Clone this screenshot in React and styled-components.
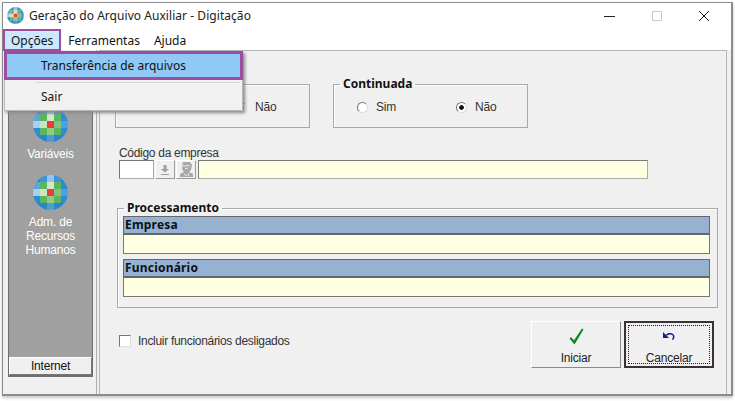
import styled, { createGlobalStyle } from 'styled-components';

const formFont = `'Liberation Sans', Arial, sans-serif`;

const GlobalStyle = createGlobalStyle`
  html, body { margin: 0; padding: 0; background: #fff; }
  body { font-family: 'Noto Sans', 'Liberation Sans', sans-serif; font-size: 12px; color: #111; }
  * { box-sizing: border-box; }
`;

const Page = styled.div`
  width: 735px;
  height: 401px;
  padding: 2px 2px 3px 2px;
  position: relative;
  overflow: hidden;
`;
const Window = styled.div`
  width: 731px;
  height: 394px;
  display: flex;
  flex-direction: column;
  background: #f0f0f0;
  border: 1px solid #8c8c8c;
  border-width: 1px 2px 2px 1px;
  box-shadow: 0 2px 3px #c8c8c8;
`;
const TitleBar = styled.div`
  height: 27px;
  flex: none;
  display: flex;
  align-items: center;
  padding: 0 4px 2px 4px;
  gap: 5px;
  background: #fff;
`;
const Title = styled.div`
  flex: 1;
  font-size: 12px;
  letter-spacing: 0.05px;
  color: #222;
`;
const WinButtons = styled.div`
  display: flex;
  align-items: center;
`;
const WinButton = styled.div`
  width: 47px;
  height: 20px;
  display: flex;
  align-items: center;
  justify-content: center;
`;
const MenuBar = styled.div`
  height: 20px;
  flex: none;
  display: flex;
  align-items: center;
  background: #fff;
`;
const MenuItem = styled.div`
  height: 20px;
  padding: 0 7px;
  display: flex;
  align-items: center;
  font-size: 12px;
  ${({ $open }) => $open && 'background: #cce8ff; outline: 2px solid #9b4da0; outline-offset: -1px; margin: 0 1px 0 1px;'}
`;
const Body = styled.div`
  flex: 1;
  min-height: 0;
  display: flex;
`;
const SideColumn = styled.div`
  width: 94px;
  flex: none;
  padding: 6px 3px 17px 5px;
  border-right: 1px solid #b0b0b0;
`;
const SidePanel = styled.div`
  height: 100%;
  display: flex;
  flex-direction: column;
  align-items: center;
  background: #a0a0a0;
  border: 1px solid #6e6e6e;
  border-width: 1px 1px 2px 1px;
  padding-top: 50px;
`;
const SideEntry = styled.div`
  width: 100%;
  display: flex;
  flex-direction: column;
  align-items: center;
  gap: 5px;
  margin-bottom: 14px;
`;
const SideLabel = styled.div`
  font-family: ${formFont};
  color: #fff;
  font-size: 12px;
  line-height: 14px;
  letter-spacing: -0.2px;
  text-align: center;
`;
const SideButton = styled.div`
  margin-top: auto;
  width: 100%;
  height: 18px;
  display: flex;
  align-items: center;
  justify-content: center;
  background: #f0f0f0;
  border: 1px solid;
  border-color: #fff #777 #777 #fff;
  font-family: ${formFont};
  font-size: 12px;
  letter-spacing: -0.2px;
`;
const Content = styled.div`
  flex: 1;
  margin-left: 2px;
  border: 1px solid #b4b4b4;
  border-bottom: none;
  padding: 26px 0 0 15px;
  margin-right: 4px;
  background: #f0f0f0;
`;
const GroupRow = styled.div`
  display: flex;
  gap: 23px;
`;
const Group = styled.fieldset`
  width: ${({ $width }) => $width}px;
  height: ${({ $height }) => $height}px;
  margin: 0;
  padding: 0;
  border: 1px solid #a8a8a8;
  box-shadow: inset 1px 1px 0 #fff;
  min-inline-size: 0;
`;
const Legend = styled.legend`
  margin-left: ${({ $left }) => $left ?? 6}px;
  padding: 0 3px;
  font-size: 12px;
  line-height: 14px;
  font-weight: 700;
  color: #111;
`;
const RadioRow = styled.div`
  display: flex;
  padding: 9px 0 0 ${({ $left }) => $left}px;
  gap: ${({ $gap }) => $gap}px;
`;
const RadioLabel = styled.label`
  width: 38px;
  display: flex;
  align-items: center;
  gap: 8px;
  font-family: ${formFont};
  font-size: 12px;
  line-height: 14px;
  letter-spacing: -0.2px;
  color: #333;
`;
const RadioDot = styled.span`
  width: 11px;
  height: 11px;
  flex: none;
  border-radius: 50%;
  background: ${({ $on }) => ($on ? 'radial-gradient(circle, #111 0 2px, #fff 2.6px)' : '#fff')};
  border: 1px solid;
  border-color: #777 #ddd #ddd #777;
`;
const FieldLabel = styled.div`
  margin: 18px 0 0 4px;
  font-family: ${formFont};
  font-size: 12px;
  line-height: 14px;
  letter-spacing: -0.3px;
  color: #333;
`;
const FieldRow = styled.div`
  display: flex;
  gap: 1px;
  margin: 0 0 0 4px;
  height: 19px;
`;
const SmallInput = styled.div`
  width: 35px;
  background: #fff;
  border: 1px solid;
  border-color: #777 #aaa #aaa #777;
`;
const IconButton = styled.div`
  width: 20px;
  display: flex;
  align-items: center;
  justify-content: center;
  background: #f0f0f0;
  border: 1px solid;
  border-color: #fff #999 #999 #fff;
  margin-right: ${({ $gap }) => $gap || 0}px;
`;
const NameInput = styled.div`
  width: 450px;
  background: #ffffe1;
  border: 1px solid;
  border-color: #777 #aaa #aaa #777;
`;
const ProcessGroup = styled.fieldset`
  width: 601px;
  height: 107px;
  margin: 22px 0 0 2px;
  padding: 1px 7px 0 5px;
  border: 1px solid #a8a8a8;
  box-shadow: inset 1px 1px 0 #fff;
  min-inline-size: 0;
`;
const TableHead = styled.div`
  height: 19px;
  margin-top: ${({ $top }) => $top || 0}px;
  padding: 1px 0 0 1px;
  background: #96b2d0;
  border: 1px solid #66666e;
  border-bottom-width: 2px;
  font-size: 12px;
  font-weight: 700;
  line-height: 14px;
  letter-spacing: 0.2px;
  color: #0c1018;
`;
const TableRow = styled.div`
  height: 19px;
  background: #ffffe1;
  border: 1px solid #77777a;
  border-top: none;
`;
const Bottom = styled.div`
  display: flex;
  align-items: flex-start;
  margin: 13px 0 0 4px;
`;
const CheckLine = styled.label`
  display: flex;
  align-items: center;
  gap: 7px;
  margin: 13px 0 0 0;
  font-family: ${formFont};
  font-size: 12px;
  line-height: 14px;
  letter-spacing: -0.3px;
  color: #333;
`;
const CheckBox = styled.span`
  width: 12px;
  height: 12px;
  background: #fff;
  border: 1px solid;
  border-color: #777 #ddd #ddd #777;
`;
const ActionRow = styled.div`
  display: flex;
  gap: 3px;
  margin-left: auto;
  margin-right: 12px;
`;
const ActionButton = styled.div`
  width: 90px;
  height: 47px;
  display: flex;
  flex-direction: column;
  align-items: center;
  gap: 3px;
  padding-top: 2px;
  font-family: ${formFont};
  font-size: 12px;
  line-height: 14px;
  letter-spacing: -0.2px;
  color: #222;
  background: #f0f0f0;
  border: 1px solid;
  border-color: #fff #8a8a8a #8a8a8a #fff;
  ${({ $focus }) =>
    $focus &&
    `border: 2px solid #3a3036;
     padding-top: 1px;
     outline: 1px dotted #222;
     outline-offset: -5px;`}
`;
const ActionIcon = styled.div`
  height: 24px;
  display: flex;
  align-items: center;
  justify-content: center;
`;
const DropMenu = styled.div`
  position: absolute;
  left: 4px;
  top: 51px;
  width: 239px;
  height: 60px;
  background: #f1f1f1;
  border: 1px solid #b8b8b8;
  box-shadow: 2px 2px 3px #8a8a8a;
`;
const DropItem = styled.div`
  height: 27px;
  padding-left: 36px;
  display: flex;
  align-items: center;
  font-size: 12px;
  background: #90c8f6;
  outline: 3px solid #9b4da0;
  outline-offset: -2px;
`;
const DropSep = styled.div`
  height: 1px;
  margin: 3px 2px 0 31px;
  background: #d4d4d4;
`;
const DropPlain = styled.div`
  height: 26px;
  padding-left: 36px;
  display: flex;
  align-items: center;
  font-size: 12px;
`;

const globeCells = [
  ['#2a86cc', '#3f93d6', '#92c6f0', '#3f93d6', '#2a86cc'],
  ['#58a8d8', '#5cb660', '#d2e8c8', '#5cb660', '#2f8cd2'],
  ['#a8d0f0', '#c8e4c0', '#ee3a3a', '#80c480', '#4fa0e0'],
  ['#2f8cd2', '#5cb660', '#92cc84', '#5cb660', '#2f8cd2'],
  ['#2a86cc', '#2a86cc', '#4a9fd0', '#2a86cc', '#2a86cc'],
];

function Globe({ size, id }) {
  return (
    <svg width={size} height={size} viewBox="0 0 35 35">
      <defs>
        <clipPath id={id}><circle cx="17.5" cy="17.5" r="17.5" /></clipPath>
      </defs>
      <g clipPath={`url(#${id})`}>
        {globeCells.map((row, r) =>
          row.map((color, c) => (
            <rect key={`${r}-${c}`} x={c * 7} y={r * 7} width="7.2" height="7.2" fill={color} />
          ))
        )}
      </g>
    </svg>
  );
}

function App() {
  return (
    <Page>
      <GlobalStyle />
      <Window>
        <TitleBar>
          <Globe size={17} id="titleGlobe" />
          <Title>Geração do Arquivo Auxiliar - Digitação</Title>
          <WinButtons>
            <WinButton>
              <svg width="12" height="12" viewBox="0 0 12 12"><path d="M0 6.5h11" stroke="#222" strokeWidth="1" /></svg>
            </WinButton>
            <WinButton>
              <svg width="12" height="12" viewBox="0 0 12 12"><rect x="1.5" y="1.5" width="9" height="9" fill="none" stroke="#ccc" /></svg>
            </WinButton>
            <WinButton>
              <svg width="12" height="12" viewBox="0 0 12 12"><path d="M1 1l10 10M11 1L1 11" stroke="#222" strokeWidth="1" /></svg>
            </WinButton>
          </WinButtons>
        </TitleBar>
        <MenuBar>
          <MenuItem $open>Opções</MenuItem>
          <MenuItem>Ferramentas</MenuItem>
          <MenuItem>Ajuda</MenuItem>
        </MenuBar>
        <Body>
          <SideColumn>
            <SidePanel>
              <SideEntry>
                <Globe size={35} id="varGlobe" />
                <SideLabel>Variáveis</SideLabel>
              </SideEntry>
              <SideEntry>
                <Globe size={35} id="admGlobe" />
                <SideLabel>Adm. de<br />Recursos<br />Humanos</SideLabel>
              </SideEntry>
              <SideButton>Internet</SideButton>
            </SidePanel>
          </SideColumn>
          <Content>
            <GroupRow>
              <Group $width={195} $height={51}>
                <Legend>Retificadora</Legend>
                <RadioRow $left={30} $gap={52}>
                  <RadioLabel><RadioDot />Sim</RadioLabel>
                  <RadioLabel><RadioDot $on />Não</RadioLabel>
                </RadioRow>
              </Group>
              <Group $width={195} $height={51}>
                <Legend>Continuada</Legend>
                <RadioRow $left={23} $gap={61}>
                  <RadioLabel><RadioDot />Sim</RadioLabel>
                  <RadioLabel><RadioDot $on />Não</RadioLabel>
                </RadioRow>
              </Group>
            </GroupRow>
            <FieldLabel>Código da empresa</FieldLabel>
            <FieldRow>
              <SmallInput />
              <IconButton>
                <svg width="12" height="12" viewBox="0 0 12 12">
                  <path d="M4.5 1h3v4h2.500L6 8.500 2 5h2.500zM2 10h8v1H2z" fill="#a0a0a0" />
                </svg>
              </IconButton>
              <IconButton $gap={1}>
                <svg width="17" height="17" viewBox="0 0 17 17">
                  <path d="M5 1h7l2 3-1 5-2 2 4 2v3H2v-3l4-2-2-3z" fill="#a8a8a8" />
                  <path d="M5 5h4M9 4l3 1M7 8l3-1M6 13l3 2M11 12l-1 3" stroke="#ececec" strokeWidth="1" fill="none" />
                </svg>
              </IconButton>
              <NameInput />
            </FieldRow>
            <ProcessGroup>
              <Legend $left={1}>Processamento</Legend>
              <TableHead>Empresa</TableHead>
              <TableRow />
              <TableHead $top={5}>Funcionário</TableHead>
              <TableRow />
            </ProcessGroup>
            <Bottom>
              <CheckLine><CheckBox />Incluir funcionários desligados</CheckLine>
              <ActionRow>
                <ActionButton>
                  <ActionIcon>
                    <svg width="15" height="17" viewBox="0 0 15 17">
                      <path d="M0.500 10.500l1.500-1.500 3 3.200L13 0.500l1.500 1L5.500 16.500z" fill="#0f8a1e" />
                    </svg>
                  </ActionIcon>
                  Iniciar
                </ActionButton>
                <ActionButton $focus>
                  <ActionIcon>
                    <svg width="15" height="12" viewBox="0 0 15 12">
                      <path d="M4.300 5.300C6 3.500 9 3.300 10.600 4.500c1.600 1.300 1.500 3.500-.2 5" fill="none" stroke="#1a1a8c" strokeWidth="1.500" />
                      <path d="M1 2v6h6z" fill="#1a1a8c" />
                    </svg>
                  </ActionIcon>
                  Cancelar
                </ActionButton>
              </ActionRow>
            </Bottom>
          </Content>
        </Body>
      </Window>
      <DropMenu>
        <DropItem>Transferência de arquivos</DropItem>
        <DropSep />
        <DropPlain>Sair</DropPlain>
      </DropMenu>
    </Page>
  );
}

export default App;
